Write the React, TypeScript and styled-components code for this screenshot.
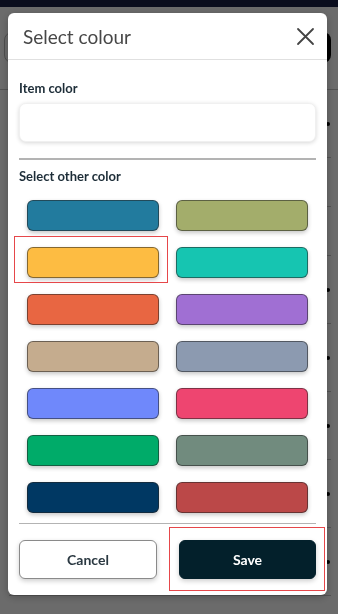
import React, { useState } from 'react'
import styled, { createGlobalStyle } from 'styled-components'

const GlobalStyle = createGlobalStyle`
  html, body {
    margin: 0;
    padding: 0;
  }
  body {
    width: 338px;
    height: 614px;
    overflow: hidden;
    background: #fff;
    font-family: Lato, 'Liberation Sans', sans-serif;
  }
`

// page that sits behind the dialog

const Page = styled.div`
  display: flex;
  flex-direction: column;
  height: 614px;
`

const TopBar = styled.div`
  height: 7px;
  background: #181f47;
`

const Toolbar = styled.div`
  display: flex;
  justify-content: space-between;
  align-items: center;
  height: 31px;
  padding: 25px 7px 0 4px;
`

const SearchBox = styled.div`
  width: 220px;
  height: 29px;
  border: 1px solid #b8b8b8;
  border-radius: 8px;
`

const DarkButton = styled.div`
  width: 70px;
  height: 31px;
  background: #000;
  border-radius: 8px;
`

const Rule = styled.div`
  height: 1px;
  margin-top: 26px;
  background: #c6c6c6;
`

const ListRow = styled.div<{ $tall?: boolean }>`
  display: flex;
  justify-content: flex-end;
  align-items: center;
  height: ${p => (p.$tall ? 67 : 48)}px;
  padding: 0 7px 0 9px;
  border-bottom: 1px solid #c6c6c6;
  margin: 0 7px 0 9px;
`

const Dot = styled.span`
  width: 4px;
  height: 4px;
  border-radius: 50%;
  background: #000;
  margin-right: -6px;
`

const FieldBox = styled.div`
  flex: 1;
  height: 31px;
  border: 1px solid #999;
  border-radius: 8px;
`

// dialog

const Overlay = styled.div`
  position: fixed;
  inset: 0;
  background: rgba(0, 0, 0, 0.58);
`

const Modal = styled.div`
  display: flex;
  flex-direction: column;
  width: 319px;
  height: 582px;
  margin: 13px 0 0 8px;
  background: #fff;
  border-radius: 6px;
  box-shadow: 0 2px 8px rgba(0, 0, 0, 0.25);
  overflow: hidden;
`

const Header = styled.div`
  display: flex;
  justify-content: space-between;
  align-items: center;
  height: 47px;
  box-sizing: border-box;
  padding: 0 12px 0 15px;
  border-bottom: 1px solid #e0e0e0;
`

const Title = styled.h2`
  margin: 0;
  font-size: 19px;
  font-weight: 400;
  color: #474747;
`

const CloseButton = styled.button`
  display: flex;
  padding: 0;
  border: none;
  background: none;
  cursor: pointer;
`

const Body = styled.div`
  display: flex;
  flex-direction: column;
  padding: 20px 11px 15px;
`

const Label = styled.div<{ $top?: number }>`
  font-size: 13px;
  line-height: 16px;
  font-weight: 700;
  color: #1d2d38;
  margin-top: ${p => p.$top ?? 0}px;
`

const ColorInput = styled.input`
  height: 39px;
  margin-top: 7px;
  box-sizing: border-box;
  border: 1px solid #f0f0f0;
  border-radius: 7px;
  box-shadow: 0 1px 4px rgba(0, 0, 0, 0.16);
  outline: none;
`

const Divider = styled.hr<{ $top: number; $size?: number }>`
  margin: ${p => p.$top}px 0 0;
  border: none;
  height: ${p => p.$size ?? 2}px;
  background: #b3b3b3;
`

const SwatchGrid = styled.div`
  display: grid;
  grid-template-columns: 1fr 1fr;
  column-gap: 17px;
  row-gap: 16px;
  padding: 0 8px;
  margin-top: 16px;
`

const SwatchCell = styled.div`
  position: relative;
`

const Swatch = styled.button<{ $color: string }>`
  display: block;
  width: 100%;
  height: 31px;
  padding: 0;
  background: ${p => p.$color};
  border: 1px solid rgba(35, 35, 35, 0.55);
  border-radius: 6px;
  box-shadow: 0 2px 4px rgba(0, 0, 0, 0.22);
  cursor: pointer;
`

const Highlight = styled.div<{ $t: number; $r: number; $b: number; $l: number }>`
  position: absolute;
  top: ${p => -p.$t}px;
  right: ${p => -p.$r}px;
  bottom: ${p => -p.$b}px;
  left: ${p => -p.$l}px;
  border: 1px solid #e6474a;
  pointer-events: none;
`

const Actions = styled.div`
  display: grid;
  grid-template-columns: 138px 137px;
  justify-content: space-between;
  margin-top: 16px;
`

const ActionCell = styled.div`
  position: relative;
`

const ActionButton = styled.button<{ $primary?: boolean }>`
  width: 100%;
  height: 39px;
  border-radius: 6px;
  font-family: inherit;
  font-size: 14px;
  font-weight: 700;
  color: ${p => (p.$primary ? '#fff' : '#2a3841')};
  background: ${p => (p.$primary ? '#03202b' : '#fff')};
  border: 1px solid ${p => (p.$primary ? '#03202b' : '#8a8a8a')};
  box-shadow: 0 2px 5px rgba(0, 0, 0, 0.2);
  cursor: pointer;
`

const SWATCHES = [
  '#227b9e', '#a3ad6b',
  '#fdbc42', '#16c5b1',
  '#e86642', '#a06fd3',
  '#c5ac8e', '#8c9ab0',
  '#6f88fb', '#ee4570',
  '#00ab69', '#718b7e',
  '#003863', '#bb4848',
]

const CloseIcon = () => (
  <svg width="19" height="19" viewBox="0 0 19 19" fill="none" stroke="#444" strokeWidth="1.8" strokeLinecap="round">
    <path d="M2 2l15 15M17 2L2 17" />
  </svg>
)

const App: React.FC = () => {
  const [selected, setSelected] = useState('#fdbc42')

  return (
    <>
      <GlobalStyle />
      <Page>
        <TopBar />
        <Toolbar>
          <SearchBox />
          <DarkButton />
        </Toolbar>
        <Rule />
        <ListRow $tall><Dot /></ListRow>
        <ListRow><FieldBox /></ListRow>
        <ListRow><FieldBox /></ListRow>
        <ListRow $tall><Dot /></ListRow>
        <ListRow $tall><Dot /></ListRow>
        <ListRow $tall><Dot /></ListRow>
        <ListRow $tall><Dot /></ListRow>
        <ListRow $tall><Dot /></ListRow>
      </Page>

      <Overlay>
        <Modal>
          <Header>
            <Title>Select colour</Title>
            <CloseButton aria-label="Close">
              <CloseIcon />
            </CloseButton>
          </Header>
          <Body>
            <Label>Item color</Label>
            <ColorInput />
            <Divider $top={16} />
            <Label $top={8}>Select other color</Label>
            <SwatchGrid>
              {SWATCHES.map(color => (
                <SwatchCell key={color}>
                  <Swatch $color={color} onClick={() => setSelected(color)} />
                  {selected === color && <Highlight $t={11} $r={9} $b={5} $l={13} />}
                </SwatchCell>
              ))}
            </SwatchGrid>
            <Divider $top={10} $size={1} />
            <Actions>
              <ActionCell>
                <ActionButton>Cancel</ActionButton>
              </ActionCell>
              <ActionCell>
                <ActionButton $primary>Save</ActionButton>
                <Highlight $t={13} $r={9} $b={12} $l={10} />
              </ActionCell>
            </Actions>
          </Body>
        </Modal>
      </Overlay>
    </>
  )
}

export default App
